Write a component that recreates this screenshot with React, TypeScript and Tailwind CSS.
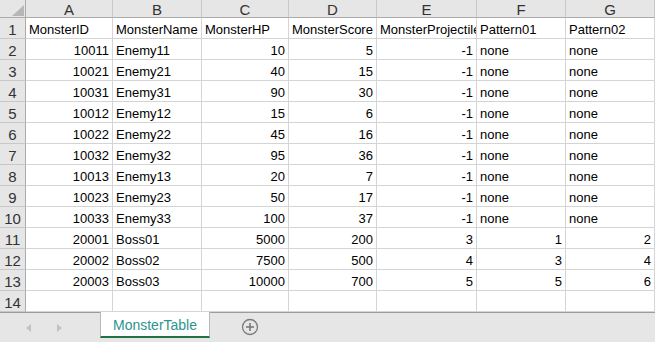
import React from "react";

type Cell = string | number;

const cols = ["A", "B", "C", "D", "E", "F", "G"];
const widths = ["w-[87px]", "w-[89px]", "w-[87px]", "w-[88px]", "w-[100px]", "w-[89px]", "w-[89px]"];

const rows: Cell[][] = [
  ["MonsterID", "MonsterName", "MonsterHP", "MonsterScore", "MonsterProjectile", "Pattern01", "Pattern02"],
  [10011, "Enemy11", 10, 5, -1, "none", "none"],
  [10021, "Enemy21", 40, 15, -1, "none", "none"],
  [10031, "Enemy31", 90, 30, -1, "none", "none"],
  [10012, "Enemy12", 15, 6, -1, "none", "none"],
  [10022, "Enemy22", 45, 16, -1, "none", "none"],
  [10032, "Enemy32", 95, 36, -1, "none", "none"],
  [10013, "Enemy13", 20, 7, -1, "none", "none"],
  [10023, "Enemy23", 50, 17, -1, "none", "none"],
  [10033, "Enemy33", 100, 37, -1, "none", "none"],
  [20001, "Boss01", 5000, 200, 3, 1, 2],
  [20002, "Boss02", 7500, 500, 4, 3, 4],
  [20003, "Boss03", 10000, 700, 5, 5, 6],
  ["", "", "", "", "", "", ""],
];

function HeaderRow() {
  return (
    <div className="flex h-[18px]">
      <div className="relative w-[26px] h-full shrink-0 bg-[#e6e6e6] border-r border-b border-[#ababab] box-border">
        {/* select-all corner */}
        <svg className="absolute left-[12px] top-[5px]" width="12" height="11" viewBox="0 0 12 11">
          <polygon points="12,0 12,11 0,11" fill="#b6b6b6" />
        </svg>
      </div>
      {cols.map((c, i) => (
        <div
          key={c}
          className={`${widths[i]} h-full shrink-0 bg-[#e6e6e6] border-r border-b border-r-[#c8c8c8] border-b-[#ababab] box-border flex items-center justify-center text-[15px] text-[#333] leading-none pt-[1px]`}
        >
          {c}
        </div>
      ))}
    </div>
  );
}

function DataRow({ n, cells }: { n: number; cells: Cell[] }) {
  return (
    <div className="flex h-[21px]">
      <div className="w-[26px] h-full shrink-0 bg-[#e6e6e6] border-r border-b border-r-[#ababab] border-b-[#c8c8c8] box-border flex items-end justify-center text-[15px] text-[#333] leading-[17px]">
        {n}
      </div>
      {cells.map((v, i) => (
        <div
          key={i}
          className={`${widths[i]} h-full shrink-0 border-r border-b border-[#d4d4d4] box-border flex items-end px-[3px] overflow-hidden whitespace-nowrap text-[13px] text-black leading-[16px] ${
            typeof v === "number" ? "justify-end" : "justify-start"
          }`}
        >
          {v}
        </div>
      ))}
    </div>
  );
}

function TabBar() {
  return (
    <div className="flex h-[30px] bg-[#e6e6e6] border-t border-[#9c9c9c] box-border">
      <div className="flex items-center w-[100px] shrink-0 pl-[26px] gap-[26px] pt-[1px]">
        <svg width="5" height="8" viewBox="0 0 5 8">
          <polygon points="5,0 5,8 0,4" fill="#c2c2c2" />
        </svg>
        <svg width="5" height="8" viewBox="0 0 5 8">
          <polygon points="0,0 0,8 5,4" fill="#c2c2c2" />
        </svg>
      </div>
      <div className="w-[110px] h-[26px] shrink-0 bg-white border-l border-r border-[#b8b8b8] border-b-2 border-b-[#217346] box-border flex items-center justify-center text-[14px] text-[#2b958f] -mt-px pt-[2px]">
        MonsterTable
      </div>
      <div className="flex items-center pl-[31px] pb-[2px]">
        <svg width="18" height="18" viewBox="0 0 18 18">
          <circle cx="9" cy="9" r="7.5" fill="none" stroke="#7a7a7a" strokeWidth="1.3" />
          <line x1="9" y1="5" x2="9" y2="13" stroke="#7a7a7a" strokeWidth="1.6" />
          <line x1="5" y1="9" x2="13" y2="9" stroke="#7a7a7a" strokeWidth="1.6" />
        </svg>
      </div>
    </div>
  );
}

export default function App() {
  return (
    <div
      className="w-[655px] h-[342px] overflow-hidden bg-white flex flex-col"
      style={{ fontFamily: '"Liberation Sans", Arial, sans-serif' }}
    >
      <HeaderRow />
      {rows.map((r, i) => (
        <DataRow key={i} n={i + 1} cells={r} />
      ))}
      <TabBar />
    </div>
  );
}
